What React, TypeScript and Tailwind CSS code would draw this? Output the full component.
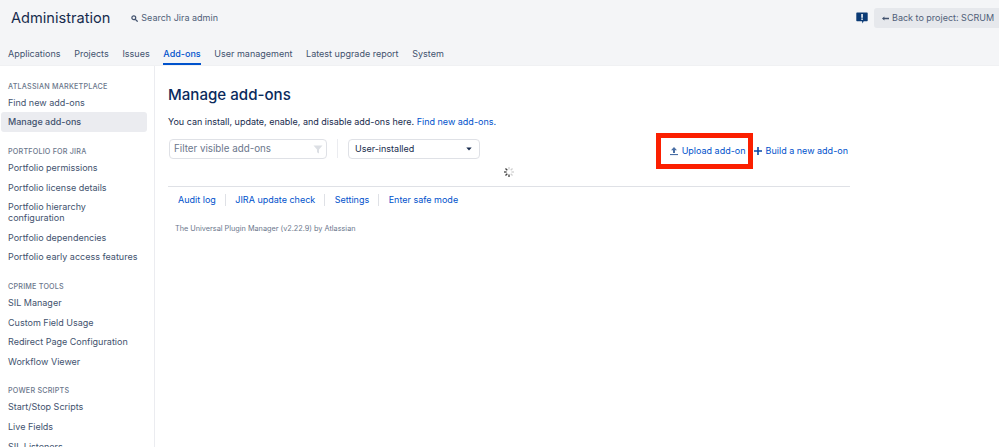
import React from "react";

const tabs = ["Applications", "Projects", "Issues", "Add-ons", "User management", "Latest upgrade report", "System"];

const groups: { title: string; items: string[] }[] = [
  { title: "ATLASSIAN MARKETPLACE", items: ["Find new add-ons", "Manage add-ons"] },
  {
    title: "PORTFOLIO FOR JIRA",
    items: [
      "Portfolio permissions",
      "Portfolio license details",
      "Portfolio hierarchy configuration",
      "Portfolio dependencies",
      "Portfolio early access features",
    ],
  },
  { title: "CPRIME TOOLS", items: ["SIL Manager", "Custom Field Usage", "Redirect Page Configuration", "Workflow Viewer"] },
  { title: "POWER SCRIPTS", items: ["Start/Stop Scripts", "Live Fields", "SIL Listeners"] },
];

function Spinner() {
  const angles = [0, 45, 90, 135, 180, 225, 270, 315];
  return (
    <svg width="12" height="12" viewBox="0 0 12 12">
      {angles.map((a, i) => (
        <line
          key={a}
          x1="6"
          y1="1"
          x2="6"
          y2="3.6"
          stroke={i < 4 ? "#d0d0d0" : "#404040"}
          strokeWidth="1.3"
          transform={`rotate(${a} 6 6)`}
        />
      ))}
    </svg>
  );
}

export default function App() {
  return (
    <div className="w-[999px] h-[447px] overflow-hidden bg-white text-[9px] text-[#42526e] [font-family:Inter,sans-serif]">
      <header className="h-[65px] bg-[#f4f5f7] flex flex-col">
        <div className="h-[42px] flex items-start">
          <h1 className="ml-[11px] mt-[7px] text-[14.6px] leading-[22px] text-[#172b4d] font-normal">Administration</h1>
          <div className="ml-[21px] mt-[11px] flex items-center gap-[3px] text-[#505f79]">
            <svg width="7" height="7" viewBox="0 0 8 8">
              <circle cx="3.2" cy="3.2" r="2.2" fill="none" stroke="#42526e" strokeWidth="1.4" />
              <line x1="5" y1="5" x2="7.6" y2="7.6" stroke="#42526e" strokeWidth="1.5" />
            </svg>
            <span className="leading-[14px]">Search Jira admin</span>
          </div>
          <div className="ml-auto mt-[8px] flex items-start">
            <svg className="mt-[4px] mr-[6px]" width="12" height="12" viewBox="0 0 12 12">
              <path d="M1 0.5h10a0.7 0.7 0 0 1 .7.7v7.4a.7.7 0 0 1-.7.7H7.6L6.6 11.5 6 9.3H1a.7.7 0 0 1-.7-.7V1.2A.7.7 0 0 1 1 .5z" fill="#0a3a75" />
              <rect x="5.3" y="2" width="1.5" height="3.8" fill="#fff" />
              <rect x="5.3" y="6.5" width="1.5" height="1.4" fill="#fff" />
            </svg>
            <div className="h-[20px] w-[125px] bg-[#e6e8ec] rounded-l-[3px] flex items-center pl-[8px] gap-[3px] text-[#505f79] whitespace-nowrap">
              <svg width="7" height="5" viewBox="0 0 7 5">
                <path d="M0 2.5 2.4 0.4v1.4H7v1.4H2.4v1.4z" fill="#42526e" />
              </svg>
              <span>Back to project: SCRUM</span>
            </div>
          </div>
        </div>
        <nav className="h-[23px] flex gap-[13.7px] pl-[8px]">
          {tabs.map((t) => (
            <div
              key={t}
              className={
                t === "Add-ons"
                  ? "h-[23px] leading-[23px] border-b-2 border-[#0052cc] text-[#0052cc] font-medium"
                  : "h-[23px] leading-[23px]"
              }
            >
              {t}
            </div>
          ))}
        </nav>
      </header>
      <div className="flex h-[382px] border-t border-[#f0f1f3]">
        <aside className="w-[155px] shrink-0 border-r border-[#ebecf0] pl-[1px] pr-[7px] pt-[14.5px] overflow-hidden">
          {groups.map((g) => (
            <div key={g.title} className="mb-[14px]">
              <div className="pl-[7px] h-[11px] leading-[11px] text-[7.2px] font-medium tracking-[0.2px] text-[#6b778c]">{g.title}</div>
              <ul className="mt-[1px]">
                {g.items.map((it) => (
                  <li
                    key={it}
                    className={
                      "pl-[7px] pr-[6px] py-[4.3px] leading-[11px] rounded-[3px] " +
                      (it === "Manage add-ons" ? "bg-[#ebecf0] font-medium" : "")
                    }
                  >
                    {it}
                  </li>
                ))}
              </ul>
            </div>
          ))}
        </aside>
        <main className="pl-[13px] w-[696px] text-[#172b4d]">
          <h2 className="mt-[17px] text-[15.1px] leading-[24px] font-medium text-[#0a2a5c]">Manage add-ons</h2>
          <p className="mt-[8px] leading-[14px]">
            You can install, update, enable, and disable add-ons here. <span className="text-[#0052cc]">Find new add-ons.</span>
          </p>
          <div className="relative flex items-start mt-[8px] h-[49px] border-b border-[#dfe1e6] w-[682px] box-content">
            <div className="ml-[1px] mt-[2px] w-[158px] h-[20px] border border-[#dfe1e6] rounded-[4px] flex items-center justify-between pl-[4px] pr-[3px] text-[#6b778c]">
              <span className="text-[9.8px]">Filter visible add-ons</span>
              <svg width="10" height="9" viewBox="0 0 10 9">
                <path d="M0.5 0.5h9L6 4.5V8.5L4 7.2V4.5z" fill="#dcdfe4" />
              </svg>
            </div>
            <div className="mt-[2px] mx-[10px] w-px h-[19px] bg-[#ebecf0]" />
            <div className="mt-[2px] w-[132px] h-[20px] border border-[#dfe1e6] rounded-[4px] flex items-center justify-between pl-[6px] pr-[7px] text-[#172b4d]">
              <span>User-installed</span>
              <svg width="6" height="4" viewBox="0 0 6 4">
                <path d="M0.3 0.5h5.4L3 3.6z" fill="#172b4d" />
              </svg>
            </div>
            <div className="absolute left-[335px] top-[29px]">
              <Spinner />
            </div>
            <div className="ml-auto pr-[2px] flex items-center text-[#0052cc] whitespace-nowrap -mt-[4px]">
              <div className="w-[97px] h-[36px] border-[5px] border-[#fb1f00] flex items-center justify-end pr-[2px] gap-[3px] bg-white">
                <svg width="10" height="10" viewBox="0 0 10 10">
                  <path d="M5 1 8 4.2H6V7H4V4.2H2z" fill="#4a6fa5" />
                  <rect x="1" y="8" width="8" height="1.1" fill="#4a6fa5" />
                </svg>
                <span>Upload add-on</span>
              </div>
              <div className="flex items-center gap-[3px]">
                <svg width="10" height="10" viewBox="0 0 10 10">
                  <path d="M4.2 1h1.6v3.2H9v1.6H5.8V9H4.2V5.8H1V4.2h3.2z" fill="#0a4aa8" />
                </svg>
                <span>Build a new add-on</span>
              </div>
            </div>
          </div>
          <div className="mt-[6px] flex items-center pl-[10px] text-[#0052cc] leading-[14px]">
            <span>Audit log</span>
            <span className="mx-[9.25px] w-px h-[12px] bg-[#dfe1e6]" />
            <span>JIRA update check</span>
            <span className="mx-[9.25px] w-px h-[12px] bg-[#dfe1e6]" />
            <span>Settings</span>
            <span className="mx-[9.25px] w-px h-[12px] bg-[#dfe1e6]" />
            <span>Enter safe mode</span>
          </div>
          <div className="mt-[17px] pl-[7px] text-[7.3px] leading-[10px] text-[#6b778c]">The Universal Plugin Manager (v2.22.9) by Atlassian</div>
        </main>
      </div>
    </div>
  );
}
